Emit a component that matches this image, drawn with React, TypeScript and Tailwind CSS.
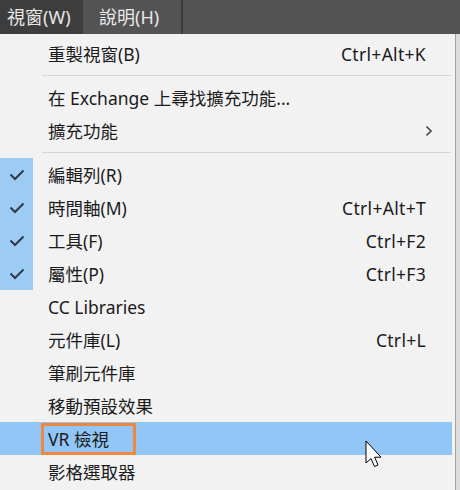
import React from "react"

type Row =
  | { kind: "sep" }
  | { kind: "item"; label: string; shortcut?: string; checked?: boolean; sub?: boolean; hot?: boolean; boxed?: boolean }

const rows: Row[] = [
  { kind: "item", label: "重製視窗(B)", shortcut: "Ctrl+Alt+K" },
  { kind: "sep" },
  { kind: "item", label: "在 Exchange 上尋找擴充功能..." },
  { kind: "item", label: "擴充功能", sub: true },
  { kind: "sep" },
  { kind: "item", label: "編輯列(R)", checked: true },
  { kind: "item", label: "時間軸(M)", shortcut: "Ctrl+Alt+T", checked: true },
  { kind: "item", label: "工具(F)", shortcut: "Ctrl+F2", checked: true },
  { kind: "item", label: "屬性(P)", shortcut: "Ctrl+F3", checked: true },
  { kind: "item", label: "CC Libraries" },
  { kind: "item", label: "元件庫(L)", shortcut: "Ctrl+L" },
  { kind: "item", label: "筆刷元件庫" },
  { kind: "item", label: "移動預設效果" },
  { kind: "item", label: "VR 檢視", hot: true, boxed: true },
  { kind: "item", label: "影格選取器" },
]

const Check = () => (
  <svg width="16" height="12" viewBox="0 0 16 12" fill="none">
    <path d="M1.5 5.5 L6 10 L14.5 1.5" stroke="#2f3a45" strokeWidth="2" />
  </svg>
)

const Cursor = () => (
  <svg width="22" height="30" viewBox="0 0 22 30" className="absolute left-[365px] top-[440px]">
    <path
      d="M1 1 L1 23 L6 18.5 L9.5 26.5 L13 25 L9.6 17.2 L16 17.2 Z"
      fill="#ffffff"
      stroke="#000000"
      strokeWidth="1"
      strokeLinejoin="round"
    />
  </svg>
)

export default function App() {
  return (
    <div className="relative w-[460px] h-[490px] overflow-hidden bg-[#f2f2f2] font-['Noto_Sans','Noto_Sans_CJK_TC',sans-serif] text-[#1b1b1b]">
      {/* Top menu bar */}
      <div className="h-[34px] bg-[#535353] flex text-[18px] text-[#e8e8e8]">
        <div className="w-[83px] h-full bg-[#3d3d3d] flex items-center pl-[7px]">視窗(W)</div>
        <div className="w-[98px] h-full flex items-center pl-[16px]">說明(H)</div>
        <div className="w-[2px] h-full bg-[#3a3a3a]" />
        <div className="flex-1" />
      </div>

      <div className="flex h-[456px]">
        {/* Dropdown */}
        <div className="w-[456px] h-full border-r border-[#a3a3a3] pt-[3px]">
          {rows.map((r, i) =>
            r.kind === "sep" ? (
              <div key={i} className="h-[11px] flex items-center pl-[42px] pr-[4px]">
                <div className="h-px w-full bg-[#d6d6d6]" />
              </div>
            ) : (
              <div
                key={i}
                className={`h-[33px] w-[452px] flex items-center text-[17.5px] ${r.hot ? "bg-[#91c6f6]" : ""}`}
              >
                <div className={`w-[33px] h-full flex items-center justify-center ${r.checked ? "bg-[#9ccbf4]" : ""}`}>
                  {r.checked && <Check />}
                </div>
                {r.boxed ? (
                  <div className="ml-[8px] w-[95px] h-[32px] border-[3px] border-[#f0873a] flex items-center pl-[4px]">
                    <span className="pt-[2px]">{r.label}</span>
                  </div>
                ) : (
                  <span className="ml-[15px] pt-[2px]">{r.label}</span>
                )}
                <div className="flex-1" />
                {r.shortcut && <span className="pr-[26px] pt-[2px] tracking-[0.3px]">{r.shortcut}</span>}
                {r.sub && (
                  <svg width="8" height="12" viewBox="0 0 8 12" className="mr-[19px]">
                    <path d="M1.5 1.5 L6 6 L1.5 10.5" stroke="#444" strokeWidth="1.6" fill="none" />
                  </svg>
                )}
              </div>
            )
          )}
        </div>
        <div className="flex-1 bg-[#dcdcdc]" />
      </div>

      <Cursor />
    </div>
  )
}
